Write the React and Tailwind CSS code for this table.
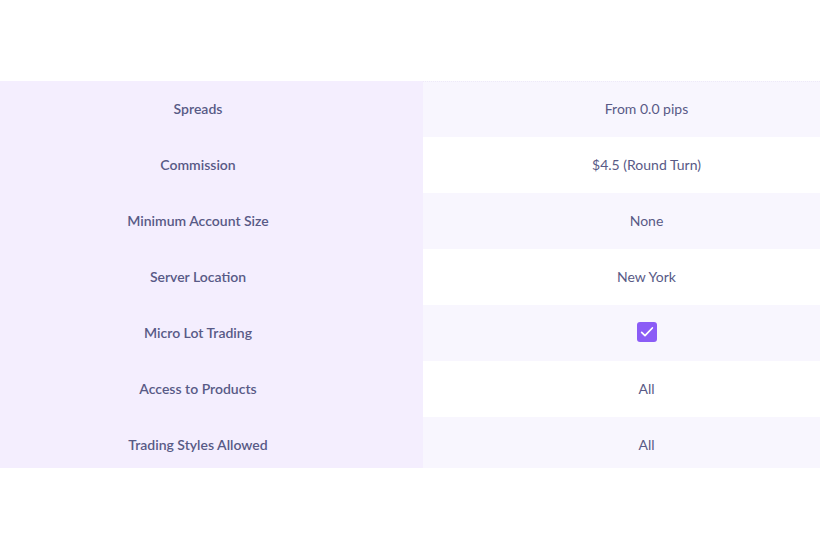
import React from "react";

const rows = [
  ["Spreads", "From 0.0 pips"],
  ["Commission", "$4.5 (Round Turn)"],
  ["Minimum Account Size", "None"],
  ["Server Location", "New York"],
  ["Micro Lot Trading", "check"],
  ["Access to Products", "All"],
  ["Trading Styles Allowed", "All"],
];

export default function App() {
  return (
    <div className="w-[820px] h-[540px] bg-white pt-[81px]" style={{ fontFamily: "Lato, 'Open Sans', sans-serif" }}>
      <div className="flex h-[387px] overflow-hidden">
        <div className="w-[423px] bg-[#f4eefe] flex flex-col pr-[27px]">
          {rows.map(([l]) => (
            <div key={l} className="h-[56px] shrink-0 flex items-center justify-center pb-[2px] text-[14px] font-semibold text-[#585a86]">
              {l}
            </div>
          ))}
        </div>
        <div className="flex-1 flex flex-col">
          {rows.map(([l, r], i) => (
            <div
              key={l}
              className={`h-[56px] shrink-0 flex items-center justify-center pl-[50px] pb-[2px] text-[14px] text-[#585a86] ${i % 2 === 0 ? "bg-[#f8f6fe]" : "bg-white"} ${i === 0 ? "border-t border-dotted border-[#eeeaf8]" : ""}`}
            >
              {r === "check" ? (
                <span className="w-[20px] h-[20px] rounded-[3px] bg-[#8b5cf6] flex items-center justify-center">
                  <svg width="16" height="16" viewBox="0 0 24 24" fill="none" stroke="white" strokeWidth="2.6" strokeLinecap="round" strokeLinejoin="round">
                    <path d="M4 12.5l5 5L20 6" />
                  </svg>
                </span>
              ) : (
                r
              )}
            </div>
          ))}
        </div>
      </div>
    </div>
  );
}
